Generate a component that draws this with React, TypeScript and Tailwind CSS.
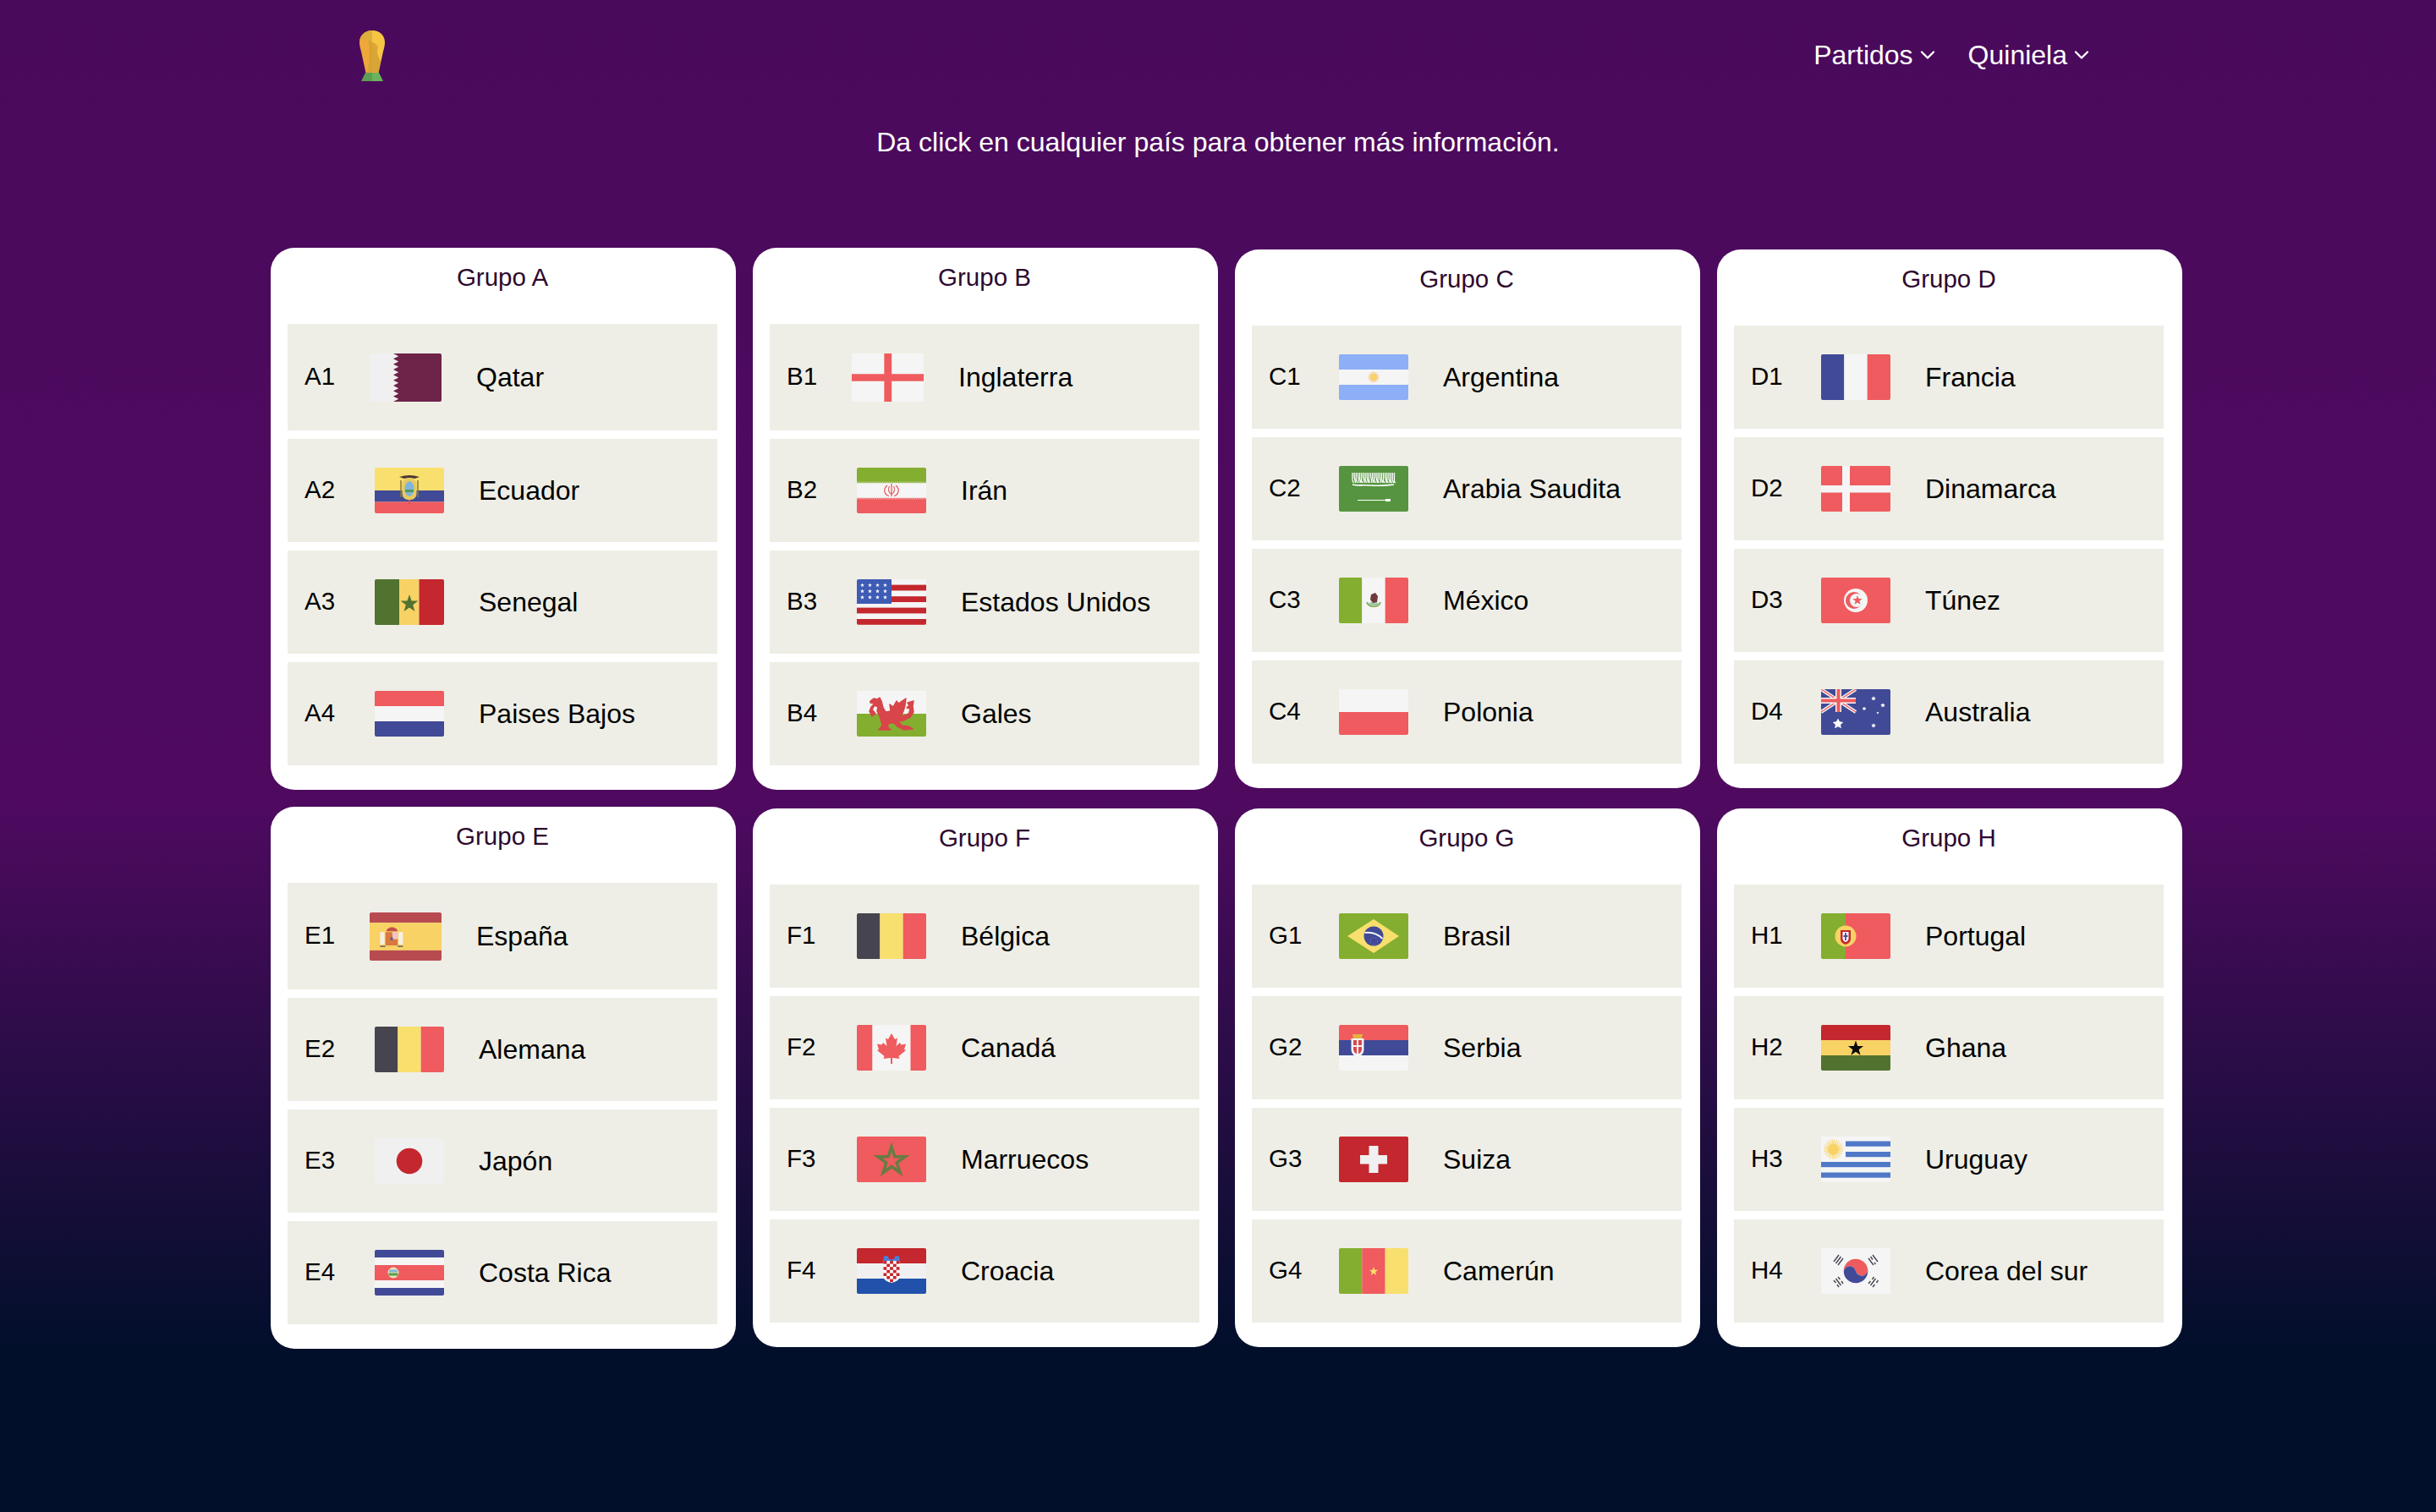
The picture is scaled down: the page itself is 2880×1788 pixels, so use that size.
import React from "react";
import { ChevronDown } from "lucide-react";

const RED = "#ef5b5e";
const DEEP = "#c4272e";
const GREEN = "#84ae30";
const DARKGREEN = "#52732f";
const BLUE = "#414a97";
const WHITE = "#f5f5f5";
const YELLOW = "#f9df6d";
const GOLD = "#f8d265";
const DARK = "#46454f";

// puntos de una estrella de 5 picos
const star = (cx: number, cy: number, r: number, inner = 0.4) => {
  const pts: string[] = [];
  for (let i = 0; i < 10; i++) {
    const rad = i % 2 === 0 ? r : r * inner;
    const a = (Math.PI / 5) * i - Math.PI / 2;
    pts.push(`${(cx + rad * Math.cos(a)).toFixed(2)},${(cy + rad * Math.sin(a)).toFixed(2)}`);
  }
  return pts.join(" ");
};

const rays = (cx: number, cy: number, r1: number, r2: number, n: number) => {
  let d = "";
  for (let i = 0; i < n; i++) {
    const a = ((Math.PI * 2) / n) * i;
    d += `M${(cx + r1 * Math.cos(a)).toFixed(2)} ${(cy + r1 * Math.sin(a)).toFixed(2)}L${(cx + r2 * Math.cos(a)).toFixed(2)} ${(cy + r2 * Math.sin(a)).toFixed(2)}`;
  }
  return d;
};

const Bands = ({ colors, vertical = false, stops }: { colors: string[]; vertical?: boolean; stops?: number[] }) => {
  const total = vertical ? 82 : 54;
  const edges = stops ?? colors.map((_, i) => (total / colors.length) * i);
  return (
    <>
      {colors.map((c, i) => {
        const start = edges[i];
        const size = (i + 1 < colors.length ? edges[i + 1] : total) - start;
        return vertical ? (
          <rect key={i} x={start} y={0} width={size} height={54} fill={c} />
        ) : (
          <rect key={i} x={0} y={start} width={82} height={size} fill={c} />
        );
      })}
    </>
  );
};

const qatarEdge = () => {
  const pts = ["82,0", "82,54", "27,54"];
  for (let i = 9; i > 0; i--) {
    pts.push(`33,${(6 * i - 3).toFixed(1)}`);
    pts.push(`27,${(6 * (i - 1)).toFixed(1)}`);
  }
  return pts.join(" ");
};

// trazos densos para la franja blanca de Arabia Saudita
const saudiStrokes = () => {
  const alturas = [9, 5, 8, 4, 7, 10, 5, 8, 6, 9, 4, 7, 9, 5, 10, 6, 8, 10, 5, 10, 7, 10, 9, 11];
  let d = "";
  alturas.forEach((h, i) => {
    const x = 16 + i * 2.15;
    d += `M${x.toFixed(2)} 8v${h}l1.5 ${(12 - h).toFixed(0)}`;
  });
  return d;
};

const flags: Record<string, React.ReactNode> = {
  qatar: (
    <>
      <rect width="82" height="54" fill="#f0f0f1" />
      <polygon points={qatarEdge()} fill="#6e2349" />
    </>
  ),
  ecuador: (
    <>
      <Bands colors={[YELLOW, BLUE, RED]} stops={[0, 27, 40.5]} />
      <path d="M29 11 Q41 7 53 11 L47 13 Q41 11 35 13Z" fill="#4d3b33" />
      <rect x="32.5" y="13" width="17" height="25" rx="7" fill="#e8c95c" />
      <ellipse cx="41" cy="25" rx="5.5" ry="9" fill="#7fb5dd" />
      <rect x="36" y="26" width="10" height="3" fill="#4f9a55" />
      <path d="M31 15v20M51 15v20" stroke="#8a7a3a" strokeWidth="1.5" />
      <rect x="40" y="38" width="2" height="5" fill="#d9534f" />
    </>
  ),
  senegal: (
    <>
      <Bands vertical colors={[DARKGREEN, GOLD, DEEP]} stops={[0, 29, 52.5]} />
      <polygon points={star(41, 29, 11)} fill={DARKGREEN} />
    </>
  ),
  netherlands: <Bands colors={[RED, WHITE, BLUE]} />,
  england: (
    <>
      <rect width="82" height="54" fill={WHITE} />
      <rect x="37" width="8.5" height="54" fill={RED} />
      <rect y="23" width="82" height="8" fill={RED} />
    </>
  ),
  iran: (
    <>
      <Bands colors={[GREEN, WHITE, RED]} />
      <path d="M0 17.5H82" stroke="#b9cf8b" strokeWidth="2" strokeDasharray="1.5 1" />
      <path d="M0 36.5H82" stroke="#f0a5a5" strokeWidth="2" strokeDasharray="1.5 1" />
      <path
        d="M41 19V34M36 21C31 25 32 32 38 33.500M46 21C51 25 50 32 44 33.500M38.500 22C36.500 25 37.500 30 41 31.500M43.500 22C45.500 25 44.500 30 41 31.500"
        fill="none"
        stroke="#e2545a"
        strokeWidth="1.200"
      />
    </>
  ),
  usa: (
    <>
      <rect width="82" height="54" fill={WHITE} />
      {[6.6, 20.2, 33.6, 47].map((y) => (
        <rect key={y} y={y} width="82" height="6.8" fill={DEEP} />
      ))}
      <rect width="41" height="29" fill="#3f5cb5" />
      {[7, 14.2, 21.4].map((y) =>
        [6.5, 15.5, 24.5, 33.5].map((x) => <polygon key={`${x}-${y}`} points={star(x, y, 2.6)} fill="#fff" />)
      )}
    </>
  ),
  wales: (
    <>
      <rect width="82" height="27" fill={WHITE} />
      <rect y="27" width="82" height="27" fill={GREEN} />
      <path
        d="M16 12L20 9L24 10L27 8L29 12L31 20L34 25L40 24L39 16L43 19L47 12L49 15L58 9L57 17L55 24L52 30L58 29L62 26L63 21L59 20L62 17L60 14L67 12L66 18L67 25L63 31L55 35L49 36L53 41L61 42L66 45L56 46L48 42L44 38L38 38L36 42L40 46L26 46L30 41L29 36L27 30L24 24L25 19L21 17L18 22L22 27L18 30L15 24L17 19L21 15L16 14Z"
        fill="#d8454a"
        stroke="#d8454a"
        strokeWidth="1.5"
        strokeLinejoin="round"
      />
    </>
  ),
  argentina: (
    <>
      <Bands colors={["#8caff7", WHITE, "#8caff7"]} />
      <path d={rays(41, 27, 3, 6.5, 20)} stroke="#f4b98a" strokeWidth="0.8" />
      <circle cx="41" cy="27" r="4" fill="#f8d265" />
    </>
  ),
  saudi: (
    <>
      <rect width="82" height="54" fill="#569440" />
      <path d={saudiStrokes()} fill="none" stroke="#fff" strokeWidth="1.3" />
      <path d="M16 22c8 2 14 0 22 1s16 0 27-1" fill="none" stroke="#fff" strokeWidth="1.6" />
      <path d="M22 40.5H57" stroke="#fff" strokeWidth="1.2" />
      <rect x="55" y="39" width="6" height="3" fill="#fff" />
    </>
  ),
  mexico: (
    <>
      <Bands vertical colors={[GREEN, WHITE, RED]} />
      <path d="M33 29c2 7 14 7 16 0" fill="none" stroke="#7da640" strokeWidth="1.6" />
      <ellipse cx="41" cy="31" rx="6" ry="2" fill="#9ec7a6" />
      <path d="M38 20l5-2 3 4-1 7-5 1-3-4z" fill="#6e3a3a" />
    </>
  ),
  poland: <Bands colors={[WHITE, RED]} />,
  france: <Bands vertical colors={[BLUE, WHITE, RED]} />,
  denmark: (
    <>
      <rect width="82" height="54" fill={RED} />
      <rect x="25" width="9" height="54" fill={WHITE} />
      <rect y="23" width="82" height="8.5" fill={WHITE} />
    </>
  ),
  tunisia: (
    <>
      <rect width="82" height="54" fill={RED} />
      <circle cx="41" cy="27" r="14" fill={WHITE} />
      <circle cx="39" cy="27" r="10" fill={RED} />
      <circle cx="42" cy="27" r="8" fill={WHITE} />
      <polygon points={star(43, 27, 6)} fill={RED} />
    </>
  ),
  australia: (
    <>
      <rect width="82" height="54" fill={BLUE} />
      <path d="M0 0L41 27M41 0L0 27" stroke="#f5f5f5" strokeWidth="4" />
      <path d="M0 0L41 27M41 0L0 27" stroke={RED} strokeWidth="1.4" />
      <path d="M20.5 0V27M0 13.5H41" stroke="#f5f5f5" strokeWidth="7" />
      <path d="M20.5 0V27M0 13.5H41" stroke={RED} strokeWidth="4" />
      <polygon points={star(20, 41, 6.5, 0.5)} fill="#fff" />
      <polygon points={star(62, 11, 2.8, 0.5)} fill="#fff" />
      <polygon points={star(51, 23, 2.5, 0.5)} fill="#fff" />
      <polygon points={star(73, 19, 2.8, 0.5)} fill="#fff" />
      <polygon points={star(67, 28, 1.6, 0.5)} fill="#fff" />
      <polygon points={star(62, 43, 2.8, 0.5)} fill="#fff" />
    </>
  ),
  spain: (
    <>
      <Bands colors={["#b84b50", GOLD, "#b84b50"]} stops={[0, 11.5, 42.5]} />
      <path d="M12 22h5v14h-5zM33 22h5v14h-5z" fill="#f5f0e6" />
      <path d="M12 38h6M32 38h6" stroke="#77736a" strokeWidth="1.5" />
      <rect x="18" y="22" width="8" height="15" rx="1" fill="#d9783f" />
      <rect x="26" y="22" width="6" height="8" fill="#f1c5c8" />
      <rect x="26" y="30" width="6" height="7" fill="#d9783f" />
      <path d="M19 21c1-6 12-6 13 0z" fill="#c2514a" />
      <rect x="24" y="28" width="2.5" height="3" fill="#4a55a0" />
    </>
  ),
  germany: <Bands vertical colors={[DARK, YELLOW, RED]} />,
  japan: (
    <>
      <rect width="82" height="54" fill="#f0f0f1" />
      <circle cx="41" cy="27" r="15.3" fill={DEEP} />
    </>
  ),
  costarica: (
    <>
      <Bands colors={[BLUE, WHITE, RED, WHITE, BLUE]} stops={[0, 9, 18, 36, 45]} />
      <circle cx="22" cy="27" r="6.5" fill="#e9e2b8" />
      <path d="M17 25h10" stroke="#7fb5dd" strokeWidth="3" />
      <path d="M16.5 29h11" stroke="#5d9c4a" strokeWidth="3" />
    </>
  ),
  belgium: <Bands vertical colors={[DARK, YELLOW, RED]} />,
  canada: (
    <>
      <Bands vertical colors={[RED, WHITE, RED]} stops={[0, 18.5, 63.5]} />
      <polygon
        points="41,10 45,17 48,15.5 46.5,25 51,21 52.5,23.5 58,22.5 56,29 58,30 49.5,37 50.5,40 42,39 42,46 40,46 40,39 31.5,40 32.5,37 24,30 26,29 24,22.5 29.5,23.5 31,21 35.5,25 34,15.5 37,17"
        fill={RED}
      />
    </>
  ),
  morocco: (
    <>
      <rect width="82" height="54" fill={RED} />
      <polygon points={star(41, 29, 17, 0.382)} fill="none" stroke="#667c46" strokeWidth="3.5" />
    </>
  ),
  croatia: (
    <>
      <Bands colors={[DEEP, "#f0f0f1", "#2151ab"]} />
      <path d="M31.5 12a3 3 0 0 1 6 0l3.500 2 3.500-2a3 3 0 0 1 6 0v4h-19z" fill="#4b7fdc" />
      <path d="M31.500 15h19v18c0 5-5 7-9.500 8-4.500-1-9.500-3-9.500-8z" fill="#fff" />
      {[0, 1, 2, 3, 4, 5, 6].map((r) =>
        [0, 1, 2, 3, 4].map((c) =>
          (r + c) % 2 === 0 && !(r === 6 && (c === 0 || c === 4)) ? (
            <rect key={`${r}-${c}`} x={31.5 + c * 3.8} y={15 + r * 3.6} width="3.8" height="3.6" fill={DEEP} />
          ) : null
        )
      )}
    </>
  ),
  brazil: (
    <>
      <rect width="82" height="54" fill={GREEN} />
      <polygon points="41,7 71,27 41,47 10,27" fill={YELLOW} />
      <circle cx="41" cy="27" r="11.500" fill={BLUE} />
      <path d="M30.500 23c8-1 15 1 21 7" fill="none" stroke="#f5f5f5" strokeWidth="2" />
      <path d={rays(41, 33, 4, 4.500, 7)} stroke="#fff" strokeWidth="0.8" />
    </>
  ),
  serbia: (
    <>
      <Bands colors={[RED, BLUE, WHITE]} />
      <path d="M16 11h12l-1 5H17z" fill="#e4b23f" />
      <path d="M14.500 16h15v13c0 5-4 8-7.500 9.500-3.500-1.500-7.500-4.500-7.500-9.500z" fill="#f5f5f5" />
      <path d="M17 18h10v11c0 3-3 5-5 6-2-1-5-3-5-6z" fill="#d9484c" />
      <path d="M22 18v17M17 25h10" stroke="#f5f5f5" strokeWidth="2" />
    </>
  ),
  swiss: (
    <>
      <rect width="82" height="54" fill={DEEP} />
      <rect x="35.500" y="11" width="11" height="32" fill="#f0f0f1" />
      <rect x="25" y="22" width="32" height="10.500" fill="#f0f0f1" />
    </>
  ),
  cameroon: (
    <>
      <Bands vertical colors={[GREEN, RED, YELLOW]} />
      <polygon points={star(41, 27.5, 5.500)} fill={YELLOW} />
    </>
  ),
  portugal: (
    <>
      <Bands vertical colors={[GREEN, RED]} stops={[0, 29]} />
      <circle cx="29" cy="27" r="12.500" fill={GOLD} />
      <path d="M23 20h12v10c0 4-3 6-6 7-3-1-6-3-6-7z" fill={DEEP} />
      <path d="M25.500 22h7v8c0 2-2 3.500-3.500 4-1.500-.5-3.500-2-3.500-4z" fill="#fff" />
      <path d="M29 23v9M26.500 27h5" stroke="#414a97" strokeWidth="1.800" />
    </>
  ),
  ghana: (
    <>
      <Bands colors={[DEEP, GOLD, DARKGREEN]} />
      <polygon points={star(41, 28, 9.500)} fill="#0b0b0b" />
    </>
  ),
  uruguay: (
    <>
      <rect width="82" height="54" fill={WHITE} />
      <rect x="29" y="5.500" width="53" height="6.200" fill="#5078c8" />
      <rect x="29" y="18" width="53" height="6.200" fill="#5078c8" />
      <rect y="30" width="82" height="6.200" fill="#5078c8" />
      <rect y="42.500" width="82" height="6.200" fill="#5078c8" />
      <path d={rays(14.500, 15, 5, 11.500, 26)} stroke={GOLD} strokeWidth="1" />
      <circle cx="14.500" cy="15" r="6.500" fill={GOLD} />
    </>
  ),
  korea: (
    <>
      <rect width="82" height="54" fill={WHITE} />
      <path d="M27 30a14 14 0 0 1 28 -6a7 7 0 0 1-14 3a7 7 0 0 0-14 3z" fill={RED} />
      <path d="M27 30a7 7 0 0 1 14-3a7 7 0 0 0 14-3a14 14 0 0 1-28 6z" fill={BLUE} />
      <g stroke={DARK} strokeWidth="1.400">
        <path d="M15 16l6-8M17.500 18l6-8M20 20l6-8" />
        <path d="M56 12l6 8M58.500 10l2.500 3.500M63 17l1.500 2M61 8l6 8" />
        <path d="M15 38l2.500 3M19 43l2 3M17.500 36l6 8M20 34l2.500 3M24 39l2 3" />
        <path d="M56 42l2.500-3M60.500 37l2-3M58.500 44l6-8M61 46l2.500-3M65.500 41l2-3" />
      </g>
    </>
  ),
};

const Flag = ({ name, large }: { name: string; large: boolean }) => (
  <svg
    viewBox="0 0 82 54"
    preserveAspectRatio="none"
    className={large ? "w-[85px] h-[57px] rounded-[2px] shrink-0" : "w-[82px] h-[54px] rounded-[2px] shrink-0"}
  >
    {flags[name]}
  </svg>
);

const Trophy = () => (
  <svg viewBox="0 0 30 60" className="w-[30px] h-[60px]">
    <path d="M2 60L7 50H15V60Z" fill="#5c9e53" />
    <path d="M28 60L23 50H15V60Z" fill="#6ab35c" />
    <path d="M15 0C6 0 0 6 0 14C0 18 1 21 2 25L7.500 50H15Z" fill="#eea83a" />
    <path d="M15 0C24 0 30 6 30 14C30 18 29 21 28 25L22.500 50H15Z" fill="#f6c544" />
    <path d="M15 0C8 0 2 5 0.500 11L6 9L10 12C13 20 12 38 9 50H22.500L25 36C21 30 20 24 22 20L19 16L15 14Z" fill="#d2a033" opacity="0.85" />
    <path d="M15 0C8 0 2 5 0.500 11L6 9L10 12L15 14Z" fill="#dcae3c" />
    <circle cx="20" cy="18" r="1.500" fill="#eea83a" />
  </svg>
);

const grupos: { letter: string; teams: [string, string][] }[] = [
  { letter: "A", teams: [["Qatar", "qatar"], ["Ecuador", "ecuador"], ["Senegal", "senegal"], ["Paises Bajos", "netherlands"]] },
  { letter: "B", teams: [["Inglaterra", "england"], ["Irán", "iran"], ["Estados Unidos", "usa"], ["Gales", "wales"]] },
  { letter: "C", teams: [["Argentina", "argentina"], ["Arabia Saudita", "saudi"], ["México", "mexico"], ["Polonia", "poland"]] },
  { letter: "D", teams: [["Francia", "france"], ["Dinamarca", "denmark"], ["Túnez", "tunisia"], ["Australia", "australia"]] },
  { letter: "E", teams: [["España", "spain"], ["Alemana", "germany"], ["Japón", "japan"], ["Costa Rica", "costarica"]] },
  { letter: "F", teams: [["Bélgica", "belgium"], ["Canadá", "canada"], ["Marruecos", "morocco"], ["Croacia", "croatia"]] },
  { letter: "G", teams: [["Brasil", "brazil"], ["Serbia", "serbia"], ["Suiza", "swiss"], ["Camerún", "cameroon"]] },
  { letter: "H", teams: [["Portugal", "portugal"], ["Ghana", "ghana"], ["Uruguay", "uruguay"], ["Corea del sur", "korea"]] },
];

const largeFlags = ["qatar", "england", "spain"];

const Grupo = ({ letter, teams }: { letter: string; teams: [string, string][] }) => (
  <div className="bg-white rounded-[28px] pl-5 pr-[22px] pb-[29px]">
    <h2 className="h-[90px] pt-[18px] text-center text-[29.5px] leading-[33px] font-normal text-[#2d0a2e]">
      Grupo {letter}
    </h2>
    <div className="flex flex-col gap-[10px]">
      {teams.map(([name, flag], i) => {
        const large = largeFlags.includes(flag);
        return (
          <div
            key={name}
            className={`flex items-center pl-5 bg-[#eeeee6] text-black ${large ? "h-[126px]" : "h-[122px]"}`}
          >
            <span className={`text-[29.5px] mb-[2px] shrink-0 ${large ? "w-[77px]" : "w-[83px]"}`}>
              {letter}
              {i + 1}
            </span>
            <Flag name={flag} large={large} />
            <span className="ml-[41px] text-[32px]">{name}</span>
          </div>
        );
      })}
    </div>
  </div>
);

export default function App() {
  return (
    <div className="min-h-[1788px] bg-[linear-gradient(to_bottom,#4a0a5c_0%,#4f0a60_53%,#020f2b_89%,#020f2b_100%)] font-['Liberation_Sans',Arial,sans-serif]">
      <header className="h-[132px] flex items-center justify-between pl-[425px] pr-[405px]">
        <Trophy />
        <nav className="flex items-center gap-[34px] mb-[3px] text-white text-[32px]">
          <a className="flex items-center gap-[3px]">
            Partidos <ChevronDown size={28} strokeWidth={2} />
          </a>
          <a className="flex items-center gap-[3px]">
            Quiniela <ChevronDown size={28} strokeWidth={2} />
          </a>
        </nav>
      </header>
      <p className="mt-[18px] mb-[106px] text-center text-white text-[32px] leading-[37px]">
        Da click en cualquier país para obtener más información.
      </p>
      <main className="ml-[320px] w-[2260px] grid grid-cols-4 gap-x-5 gap-y-5 items-center">
        {grupos.map((g) => (
          <Grupo key={g.letter} letter={g.letter} teams={g.teams} />
        ))}
      </main>
    </div>
  );
}
